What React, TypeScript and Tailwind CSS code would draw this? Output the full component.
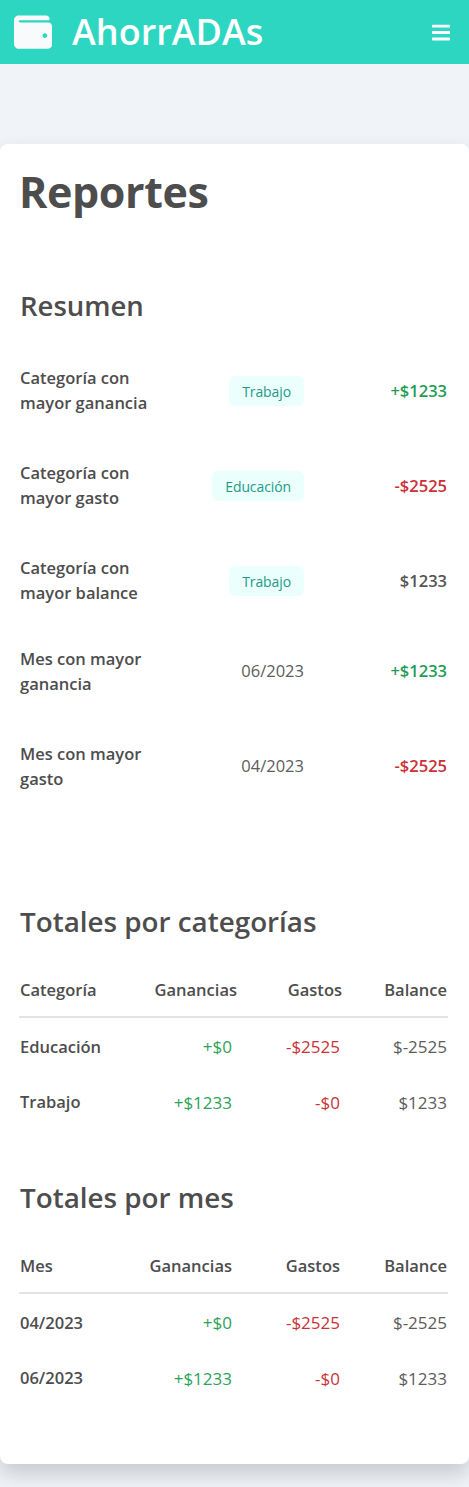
import { FaBars, FaWallet } from 'react-icons/fa'

const font = { fontFamily: '"Open Sans", sans-serif' }

const summary = [
  { label: ['Categoría con', 'mayor ganancia'], tag: 'Trabajo', value: '+$1233', color: 'text-[#1f9d55]', mt: 'mt-0' },
  { label: ['Categoría con', 'mayor gasto'], tag: 'Educación', value: '-$2525', color: 'text-[#cc2f36]', mt: 'mt-[45px]' },
  { label: ['Categoría con', 'mayor balance'], tag: 'Trabajo', value: '$1233', color: 'text-[#555555]', mt: 'mt-[45px]' },
  { label: ['Mes con mayor', 'ganancia'], date: '06/2023', value: '+$1233', color: 'text-[#1f9d55]', mt: 'mt-[41px]' },
  { label: ['Mes con mayor', 'gasto'], date: '04/2023', value: '-$2525', color: 'text-[#cc2f36]', mt: 'mt-[45px]' },
]

function TotalsTable({
  title,
  first,
  gainHeadPad,
  costHeadPad,
  rows,
  className,
}: {
  title: string
  first: string
  gainHeadPad: string
  costHeadPad: string
  rows: string[][]
  className: string
}) {
  return (
    <section className={className}>
      <h2 className="text-[27.8px] leading-[40px] font-semibold">{title}</h2>
      <table className="mt-[35px] ml-[-1px] w-[429px] table-fixed text-[16.5px]">
        <thead>
          <tr className="h-[41px] border-b-2 border-[#e3e3e3]">
            <th className="w-[110px] pb-[12px] pl-[1px] text-left font-semibold">{first}</th>
            <th className={`w-[108px] pb-[12px] text-right font-semibold ${gainHeadPad}`}>Ganancias</th>
            <th className={`w-[105px] pb-[12px] text-right font-semibold ${costHeadPad}`}>Gastos</th>
            <th className="pr-[1px] pb-[12px] text-right font-semibold">Balance</th>
          </tr>
        </thead>
        <tbody>
          {rows.map((r, i) => (
            <tr key={r[0]} className={i === 0 ? 'h-[59px]' : 'h-[53px]'}>
              <td className={`pl-[1px] font-semibold ${i === 0 ? 'pt-[1px]' : ''}`}>{r[0]}</td>
              <td className="pr-[5px] text-right text-[17px] text-[#2ca25a]">{r[1]}</td>
              <td className="pr-[2px] text-right text-[17px] text-[#c93236]">{r[2]}</td>
              <td className="pr-[1px] text-right text-[17px] text-[#5c5c5c]">{r[3]}</td>
            </tr>
          ))}
        </tbody>
      </table>
    </section>
  )
}

export default function App() {
  return (
    <div style={font} className="min-h-[1487px] bg-[#f0f4f9] text-[#4d4d4d]">
      <nav className="flex h-16 items-center justify-between bg-[#2dd6c1] pr-[19px] pl-[14px] text-white">
        <div className="flex items-center gap-5">
          <FaWallet className="h-[38px] w-[38px] text-[#f8fafc]" />
          <span className="text-[36px] leading-none font-semibold">AhorrADAs</span>
        </div>
        <FaBars className="h-[21px] w-[18px]" />
      </nav>

      <main className="mt-20 h-[1320px] rounded-lg bg-white px-5 shadow-[0_10px_20px_rgba(10,10,10,0.18)]">
        <h1 className="ml-[-1px] pt-[18px] text-[43px] leading-[60px] font-bold tracking-[-0.4px]">Reportes</h1>

        <h2 className="mt-[64px] text-[27.5px] leading-[40px] font-semibold">Resumen</h2>

        <div className="mt-[39px] flex flex-col">
          {summary.map((row) => (
            <div key={row.label.join(' ')} className={`flex h-[50px] items-center ${row.mt}`}>
              <div className="w-[170px] text-[16.5px] leading-[25px] font-semibold">
                {row.label[0]}
                <br />
                {row.label[1]}
              </div>
              <div className="flex w-[114px] justify-end">
                {row.tag ? (
                  <span className="mt-[2px] flex h-[30px] items-center rounded-md bg-[#ebfffc] px-[13px] text-[14px] tracking-[-0.1px] text-[#1e9a87]">
                    {row.tag}
                  </span>
                ) : (
                  <span className="text-[16.5px] text-[#5c5c5c]">{row.date}</span>
                )}
              </div>
              <div
                className={`flex-1 pr-[2px] text-right text-[16.5px] font-semibold ${row.tag ? 'pt-[2px]' : ''} ${row.color}`}
              >
                {row.value}
              </div>
            </div>
          ))}
        </div>

        <TotalsTable
          className="mt-[110px]"
          title="Totales por categorías"
          first="Categoría"
          gainHeadPad=""
          costHeadPad=""
          rows={[
            ['Educación', '+$0', '-$2525', '$-2525'],
            ['Trabajo', '+$1233', '-$0', '$1233'],
          ]}
        />
        <TotalsTable
          className="mt-[48px]"
          title="Totales por mes"
          first="Mes"
          gainHeadPad="pr-[5px]"
          costHeadPad="pr-[2px]"
          rows={[
            ['04/2023', '+$0', '-$2525', '$-2525'],
            ['06/2023', '+$1233', '-$0', '$1233'],
          ]}
        />
      </main>
    </div>
  )
}
